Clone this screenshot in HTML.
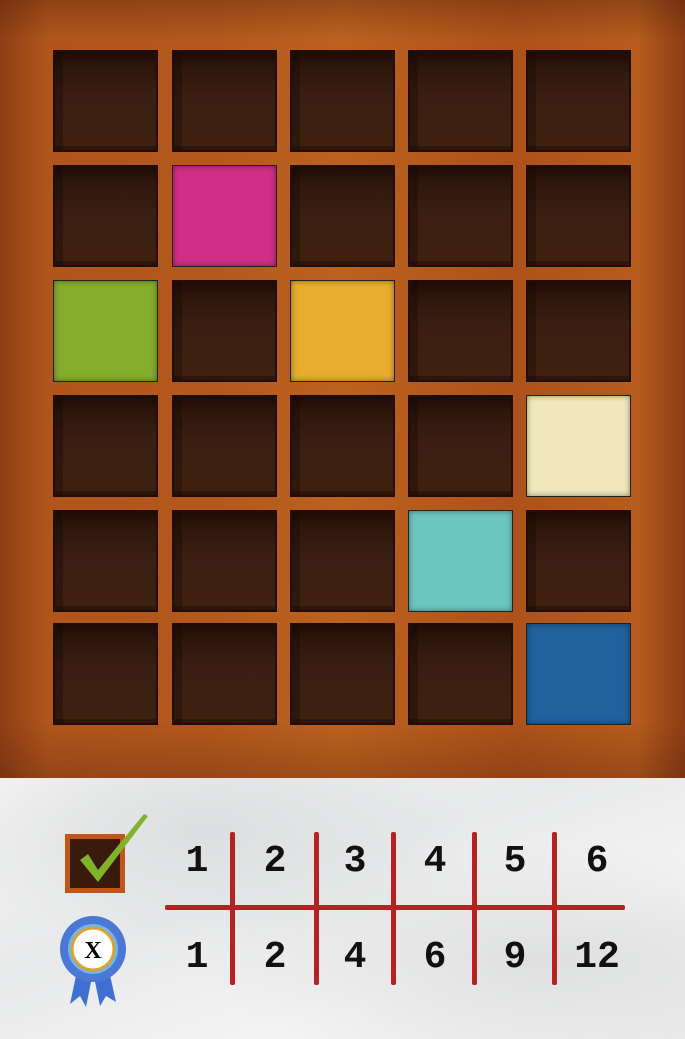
<!DOCTYPE html>
<html><head><style>
body{margin:0;width:685px;height:1039px;overflow:hidden;position:relative;font-family:"Liberation Sans",sans-serif}
.wood{position:absolute;left:0;top:0;width:685px;height:785px;background:linear-gradient(90deg,#8e3e14 0%,#b0561c 7%,#b3581d 30%,#bb621f 50%,#ad521a 75%,#b65c1e 93%,#8c3c15 100%)}
.wood:after{content:"";position:absolute;inset:0;background:linear-gradient(180deg,rgba(60,20,5,.3) 0%,rgba(0,0,0,0) 5%,rgba(0,0,0,0) 92%,rgba(70,25,5,.3) 100%)}
.c{position:absolute;width:105px;height:102px;box-sizing:border-box;background:linear-gradient(180deg,#1e0c06 0%,#2e160c 15%,#3b1e12 45%,#40210f 100%);border:2px solid #1f0d06;box-shadow:inset 8px 0 0 rgba(20,8,3,.35),inset 0 -4px 0 rgba(20,8,3,.4)}
.f{box-shadow:inset 0 0 6px rgba(0,0,0,.45);border:1px solid #222}
.paper{position:absolute;left:0;top:778px;width:685px;height:261px;background:radial-gradient(ellipse at 30% 20%,#dcdedf 0%,rgba(0,0,0,0) 40%),radial-gradient(ellipse at 80% 70%,#dedfe0 0%,rgba(0,0,0,0) 45%),linear-gradient(160deg,#f4f4f4,#e8e9ea 40%,#f4f4f4 70%,#ececec)}
.n{position:absolute;font:bold 38px "Liberation Mono",monospace;color:#111;width:60px;text-align:center}
.v{position:absolute;width:5px;background:#b52222;top:832px;height:153px;border-radius:2px}
</style></head><body>
<div class="wood"></div>
<div class="c" style="left:53px;top:50px"></div><div class="c" style="left:172px;top:50px"></div><div class="c" style="left:290px;top:50px"></div><div class="c" style="left:408px;top:50px"></div><div class="c" style="left:526px;top:50px"></div>
<div class="c" style="left:53px;top:165px"></div><div class="c f" style="left:172px;top:165px;background:#cf2f86"></div><div class="c" style="left:290px;top:165px"></div><div class="c" style="left:408px;top:165px"></div><div class="c" style="left:526px;top:165px"></div>
<div class="c f" style="left:53px;top:280px;background:#86ad2e"></div><div class="c" style="left:172px;top:280px"></div><div class="c f" style="left:290px;top:280px;background:#e8ad2c"></div><div class="c" style="left:408px;top:280px"></div><div class="c" style="left:526px;top:280px"></div>
<div class="c" style="left:53px;top:395px"></div><div class="c" style="left:172px;top:395px"></div><div class="c" style="left:290px;top:395px"></div><div class="c" style="left:408px;top:395px"></div><div class="c f" style="left:526px;top:395px;background:#f0e8bc"></div>
<div class="c" style="left:53px;top:510px"></div><div class="c" style="left:172px;top:510px"></div><div class="c" style="left:290px;top:510px"></div><div class="c f" style="left:408px;top:510px;background:#6cc6c0"></div><div class="c" style="left:526px;top:510px"></div>
<div class="c" style="left:53px;top:623px"></div><div class="c" style="left:172px;top:623px"></div><div class="c" style="left:290px;top:623px"></div><div class="c" style="left:408px;top:623px"></div><div class="c f" style="left:526px;top:623px;background:#20619e"></div>
<div class="paper"></div>
<div style="position:absolute;left:65px;top:834px;width:60px;height:59px;box-sizing:border-box;background:#3a1a0c;border:5px solid #c0561c"></div>
<svg style="position:absolute;left:70px;top:810px" width="82" height="80"><path d="M10 50 L28 72 L78 6 L74 4 L28 60 L18 44 Z" fill="#7fb32a"/></svg>
<svg style="position:absolute;left:58px;top:912px" width="72" height="100">
<path d="M22 45 L12 92 L22 84 L28 95 L36 55 Z M48 45 L58 90 L48 84 L42 94 L34 55Z" fill="#3f6fd0"/>
<circle cx="35" cy="37" r="33" fill="#4a78d4"/><circle cx="35" cy="37" r="25" fill="#6cb8ec"/>
<circle cx="35" cy="37" r="21" fill="#fff" stroke="#d9a235" stroke-width="3"/>
<text x="35" y="46" font-family="Liberation Serif" font-size="24" font-weight="bold" text-anchor="middle">X</text></svg>
<div style="position:absolute;left:165px;top:905px;width:460px;height:5px;background:#b52222;border-radius:2px"></div>
<div class="v" style="left:230px"></div><div class="v" style="left:314px"></div><div class="v" style="left:391px"></div><div class="v" style="left:472px"></div><div class="v" style="left:552px"></div>
<div class="n" style="left:167px;top:840px">1</div><div class="n" style="left:245px;top:840px">2</div><div class="n" style="left:325px;top:840px">3</div><div class="n" style="left:405px;top:840px">4</div><div class="n" style="left:485px;top:840px">5</div><div class="n" style="left:567px;top:840px">6</div>
<div class="n" style="left:167px;top:936px">1</div><div class="n" style="left:245px;top:936px">2</div><div class="n" style="left:325px;top:936px">4</div><div class="n" style="left:405px;top:936px">6</div><div class="n" style="left:485px;top:936px">9</div><div class="n" style="left:562px;top:936px;width:70px">12</div>
</body></html>
